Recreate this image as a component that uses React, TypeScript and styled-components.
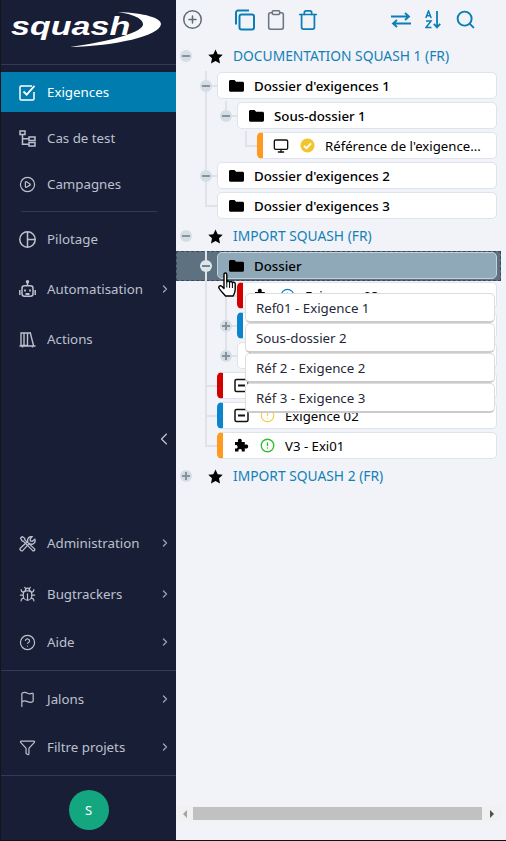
import React from 'react';
import styled, { createGlobalStyle } from 'styled-components';
import {
	Bug,
	ChevronLeft,
	ChevronRight,
	CircleAlert,
	CircleHelp,
	CirclePlay,
	CirclePlus,
	Clipboard,
	Filter,
	Flag,
	Info,
	Monitor,
	Search,
	Trash,
} from 'lucide-react';

const GlobalStyle = createGlobalStyle`
	html, body {
		margin: 0;
		padding: 0;
		background: #111;
	}
	* {
		box-sizing: border-box;
	}
`;

const FONT = `"Noto Sans", "Open Sans", sans-serif`;

const Page = styled.div`
	display: flex;
	width: 506px;
	height: 840px;
	font-family: ${FONT};
	overflow: hidden;
`;

const Sidebar = styled.nav`
	position: relative;
	display: flex;
	flex-direction: column;
	flex: 0 0 176px;
	border-left: 1px solid #14141c;
	background: #191e37;
`;

const LogoBar = styled.div`
	position: relative;
	flex: 0 0 65px;
	border-bottom: 1px solid #34385a;
`;

const LogoText = styled.span`
	position: absolute;
	left: 10px;
	top: 8px;
	font-family: 'Liberation Sans', sans-serif;
	font-size: 26px;
	font-weight: 700;
	font-style: italic;
	line-height: 36px;
	color: #fff;
	transform: scaleX(1.31);
	transform-origin: left center;
`;

const Swoosh = styled.svg`
	position: absolute;
	left: 0;
	top: 0;
`;

const NavGroup = styled.div<{ $gap: number; $top?: number }>`
	display: flex;
	flex-direction: column;
	gap: ${(p) => p.$gap}px;
	padding-top: ${(p) => p.$top ?? 0}px;
`;

const NavItem = styled.div<{ $active?: boolean; $after?: number }>`
	display: flex;
	align-items: center;
	height: 40px;
	margin-bottom: ${(p) => p.$after ?? 0}px;
	padding-left: 18px;
	padding-right: 5px;
	background: ${(p) => (p.$active ? '#007cae' : 'transparent')};
	color: ${(p) => (p.$active ? '#fff' : '#bcc1cd')};
	font-size: 13.3px;
`;

const NavIcon = styled.span`
	display: flex;
	align-items: center;
	justify-content: center;
	flex: 0 0 17px;
	margin-right: 11px;
`;

const NavLabel = styled.span`
	flex: 1;
	white-space: nowrap;
`;

const NavArrow = styled.span`
	display: flex;
	color: #9ba0ae;
`;

const NavSeparator = styled.div<{ $inset?: boolean; $top: number; $bottom: number }>`
	height: 1px;
	margin: ${(p) => p.$top}px ${(p) => (p.$inset ? '19px' : '0')} ${(p) => p.$bottom}px
		${(p) => (p.$inset ? '20px' : '0')};
	background: #34385a;
`;

const Spacer = styled.div`
	flex: 1;
`;

const Collapse = styled.span`
	position: absolute;
	left: 153px;
	top: 429px;
	color: #c4c8d2;
	display: flex;
`;

const AvatarBar = styled.div`
	display: flex;
	justify-content: center;
	padding: 14px 0 10px;
`;

const Avatar = styled.div`
	display: flex;
	align-items: center;
	justify-content: center;
	width: 40px;
	height: 40px;
	border-radius: 50%;
	background: #14a67e;
	color: #fff;
	font-size: 13px;
`;

const Main = styled.main`
	position: relative;
	display: flex;
	flex-direction: column;
	flex: 1;
	padding-right: 5px;
	background: #f1f3f8;
`;

const Toolbar = styled.div`
	display: flex;
	align-items: center;
	flex: 0 0 41px;
	padding-bottom: 2px;
`;

const ToolButton = styled.span<{ $color: string }>`
	display: flex;
	align-items: center;
	justify-content: center;
	flex: 0 0 32px;
	height: 36px;
	color: ${(p) => p.$color};
`;

const ToolGap = styled.div<{ $width: number }>`
	flex: 0 0 ${(p) => p.$width}px;
`;

const Tree = styled.div`
	flex: 1;
	display: flex;
	flex-direction: column;
`;

const Row = styled.div<{ $selected?: boolean }>`
	display: flex;
	align-items: stretch;
	height: 30px;
	${(p) =>
		p.$selected
			? `background: #5e7180; outline: 1px dashed #39495a; outline-offset: -1px;`
			: ''}
`;

type Line = 'none' | 'through' | 'branch' | 'last';

const Cell = styled.div<{ $line?: Line }>`
	position: relative;
	display: flex;
	align-items: center;
	justify-content: center;
	flex: 0 0 20px;

	&::before {
		content: '';
		display: ${(p) => (!p.$line || p.$line === 'none' ? 'none' : 'block')};
		position: absolute;
		left: 9px;
		top: 0;
		width: 2px;
		height: ${(p) => (p.$line === 'last' ? '16px' : '30px')};
		background: #dfe3e8;
	}

	&::after {
		content: '';
		display: ${(p) => (p.$line === 'branch' || p.$line === 'last' ? 'block' : 'none')};
		position: absolute;
		left: 9px;
		top: 14px;
		width: 12px;
		height: 2px;
		background: #dfe3e8;
	}
`;

const Toggle = styled.span<{ $light?: boolean; $plus?: boolean }>`
	position: relative;
	z-index: 1;
	display: block;
	width: 12px;
	height: 12px;
	border-radius: 50%;
	background: ${(p) => (p.$light ? '#dfe6ea' : '#d6dee5')};

	&::before {
		content: '';
		position: absolute;
		left: 2px;
		top: 5px;
		width: 8px;
		height: 2px;
		background: ${(p) => (p.$light ? '#74858f' : '#87939c')};
	}

	&::after {
		content: '';
		display: ${(p) => (p.$plus ? 'block' : 'none')};
		position: absolute;
		left: 5px;
		top: 2px;
		width: 2px;
		height: 8px;
		background: #87939c;
	}
`;

const ProjectStar = styled.span`
	display: flex;
	align-items: center;
	justify-content: center;
	flex: 0 0 37px;
	padding-left: 1px;
	color: #000;
`;

const ProjectName = styled.span`
	align-self: center;
	margin-bottom: 2px;
	font-size: 13.8px;
	font-weight: 400;
	color: #1380b6;
	white-space: nowrap;
`;

const Card = styled.div<{ $tab?: string; $selected?: boolean }>`
	display: flex;
	align-items: center;
	flex: 0 0 auto;
	width: calc(100% - var(--indent) - 4px);
	height: 27px;
	margin: 1px 0 2px 1px;
	border: 1px solid ${(p) => (p.$selected ? '#c3d2da' : '#dde4ec')};
	border-left: ${(p) => (p.$tab ? `6px solid ${p.$tab}` : undefined)};
	border-radius: 5px;
	background: ${(p) => (p.$selected ? '#90a9b8' : '#fff')};
	color: #000;
	font-size: 13.3px;
	white-space: nowrap;
	overflow: hidden;
`;

const FolderSlot = styled.span`
	display: flex;
	flex: 0 0 auto;
	margin: 0 10px 0 11px;
`;

const FolderName = styled.span`
	font-weight: 500;
`;

const KindSlot = styled.span`
	display: flex;
	justify-content: center;
	flex: 0 0 16px;
	margin-left: 10px;
`;

const StatusSlot = styled.span`
	display: flex;
	justify-content: center;
	flex: 0 0 16px;
	margin: 0 10px;
`;

const RequirementName = styled.span`
	font-size: 13.2px;
`;

const DragStack = styled.div`
	position: absolute;
	left: 69px;
	top: 293px;
	display: flex;
	flex-direction: column;
	width: 250px;
`;

const DragItem = styled.div`
	display: flex;
	align-items: center;
	height: 30px;
	padding-left: 10px;
	border: 1px solid #ddd;
	border-bottom: 2px solid #cbcbcb;
	border-radius: 5px;
	background: #fff;
	color: #1f2a38;
	font-size: 13.3px;
`;

const HandCursor = styled.svg`
	position: absolute;
	left: 42px;
	top: 272px;
`;

const ScrollTrack = styled.div`
	display: flex;
	align-items: center;
	flex: 0 0 15px;
	margin-bottom: 19px;
	background: #f1f1f1;
`;

const ScrollArrow = styled.span<{ $right?: boolean; $color: string }>`
	flex: 0 0 ${(p) => (p.$right ? 19 : 17)}px;
	display: flex;
	justify-content: center;

	&::before {
		content: '';
		border-style: solid;
		border-width: 4px 0 4px 4px;
		border-color: transparent transparent transparent ${(p) => p.$color};
		transform: ${(p) => (p.$right ? 'none' : 'scaleX(-1)')};
	}
`;

const ScrollThumb = styled.div`
	flex: 1;
	height: 13px;
	background: #c1c1c1;
`;

const Folder = () => (
	<svg width="15" height="13" viewBox="0 0 15 13">
		<path d="M1.5 1h4l1.6 1.8h6.4c.8 0 1.5.7 1.5 1.5v6.9c0 .8-.7 1.5-1.5 1.5h-12C.7 12.7 0 12 0 11.2V2.5C0 1.7.7 1 1.5 1z" />
	</svg>
);

const Star = () => (
	<svg width="15" height="15" viewBox="0 0 24 24">
		<path d="M12 .8l3.5 7.5 8.1 1-6 5.6 1.6 8.2L12 19l-7.2 4.1 1.6-8.2-6-5.6 8.1-1z" />
	</svg>
);

const Puzzle = () => (
	<svg width="15" height="15" viewBox="0 0 15 15">
		<path d="M1 4h3.2C3.4 3 3.8.8 5.8.8S8.3 3 7.5 4h3.3v3c1-.8 3.4-.6 3.400 1.600s-2.400 2.300-3.400 1.600v3.400H7.600c.6-1 .3-2.600-1.500-2.600S4 12.600 4.600 13.600H1v-3.200c1 .5 2.600.1 2.600-1.500S2 6.800 1 7.300z" />
	</svg>
);

const MinusBox = () => (
	<svg width="15" height="15" viewBox="0 0 15 15" fill="none" stroke="#111" strokeWidth="1.5">
		<rect x="1" y="1.5" width="13" height="12" rx="1.5" />
		<path d="M4 7.5h7" strokeWidth="2" />
	</svg>
);

const CheckedStatus = () => (
	<svg width="15" height="15" viewBox="0 0 15 15">
		<circle cx="7.5" cy="7.5" r="7" fill="#f2c52c" />
		<path d="M4 7.8l2.500 2.400L11 5.400" fill="none" stroke="#fff" strokeWidth="1.8" />
	</svg>
);

const CheckIcon = () => (
	<svg width="17" height="17" viewBox="0 0 17 17" fill="none" stroke="currentColor" strokeWidth="1.5">
		<path d="M13 2H2.200C1.500 2 1 2.500 1 3.200v11.600c0 .7.500 1.200 1.200 1.200h11.600c.7 0 1.200-.5 1.200-1.200V8" />
		<path d="M4.500 7.500l3.200 3.200L15.500 1.800" strokeWidth="1.8" />
	</svg>
);

const TreeIcon = () => (
	<svg width="17" height="17" viewBox="0 0 17 17" fill="none" stroke="currentColor" strokeWidth="1.5">
		<rect x="1" y="1" width="5" height="3.5" />
		<rect x="10" y="7" width="6" height="3.5" />
		<rect x="10" y="12.5" width="6" height="3.5" />
		<path d="M3.500 4.500V14.200H10M3.500 8.800H10" />
	</svg>
);

const PilotageIcon = () => (
	<svg width="17" height="17" viewBox="0 0 17 17" fill="none" stroke="currentColor" strokeWidth="1.5">
		<circle cx="8.5" cy="8.5" r="7.7" />
		<path d="M8.500 .7V16.300M8.500 8.500H16.300" />
	</svg>
);

const BotIcon = () => (
	<svg width="17" height="18" viewBox="0 0 17 18" fill="none" stroke="currentColor" strokeWidth="1.5">
		<circle cx="8.5" cy="1.8" r="1" fill="currentColor" />
		<path d="M8.500 3v2.500" />
		<rect x="3" y="5.8" width="11" height="10.5" rx="2.5" />
		<path d="M.8 10v5M16.200 10v5" />
		<path d="M6 9.500v2M11 9.500v2M6.500 14h4" strokeWidth="1.8" />
	</svg>
);

const BooksIcon = () => (
	<svg width="17" height="17" viewBox="0 0 17 17" fill="none" stroke="currentColor" strokeWidth="1.4">
		<path d="M2 2h3v12.500H2zM5 2h3.500v12.500H5zM8.500 2.200l2.800-.4 3.200 12.700M.5 15h16" />
		<path d="M3.500 15v1.500M13.500 15v1.500" />
	</svg>
);

const ToolsIcon = () => (
	<svg width="17" height="17" viewBox="0 0 17 17" fill="none" stroke="currentColor" strokeWidth="1.3">
		<path d="M1.500 3.200L3.200 1.500l2.500 1.800.2 1.700L15.500 13.800a1.300 1.300 0 0 1-1.800 1.800L4.200 6.100l-1 0z" />
		<path d="M15.800 4.300l-2.400 2-1.900-.4-.4-1.900 2-2.300a3.500 3.500 0 0 0-4.200 4.600L1.500 13a1.700 1.700 0 0 0 2.400 2.400l6.500-7a3.500 3.500 0 0 0 5.400-4.100z" />
	</svg>
);

const CopyIcon = () => (
	<svg width="21" height="22" viewBox="0 0 21 22" fill="none" stroke="currentColor" strokeWidth="2">
		<path d="M2 15.500V3.500A2 2 0 0 1 4 1.500h11" />
		<rect x="5.5" y="5.5" width="14.5" height="15" rx="2" />
	</svg>
);

const SwapIcon = () => (
	<svg width="20" height="16" viewBox="0 0 20 16" fill="none" stroke="currentColor" strokeWidth="1.8">
		<path d="M0 4.500h18M14 1l4 3.500-4 3.500M20 11.500H2M6 8l-4 3.500L6 15" />
	</svg>
);

const SortIcon = () => (
	<svg width="16" height="19" viewBox="0 0 16 19" fill="none" stroke="currentColor" strokeWidth="1.8">
		<path d="M12 1v16M8.800 13.800l3.200 3.600 3.200-3.600" />
		<path d="M.8 8L3.500 1l2.700 7M1.800 5.800h3.400" strokeWidth="1.5" />
		<path d="M1 11h5l-5 6.500h5.500" strokeWidth="1.5" />
	</svg>
);

const iconSize = { size: 17, strokeWidth: 1.7 };

const Arrow = () => (
	<NavArrow>
		<ChevronRight size={12} strokeWidth={2.8} />
	</NavArrow>
);

const Requirement = ({
	kind,
	status,
	name,
	tab,
}: {
	kind: React.ReactNode;
	status?: React.ReactNode;
	name: string;
	tab: string;
}) => (
	<Card $tab={tab}>
		<KindSlot>{kind}</KindSlot>
		<StatusSlot>{status}</StatusSlot>
		<RequirementName>{name}</RequirementName>
	</Card>
);

const FolderCard = ({ name, selected }: { name: string; selected?: boolean }) => (
	<Card $selected={selected}>
		<FolderSlot>
			<Folder />
		</FolderSlot>
		<FolderName>{name}</FolderName>
	</Card>
);

const ProjectRow = ({ name, plus }: { name: string; plus?: boolean }) => (
	<Row>
		<Cell>
			<Toggle $plus={plus} />
		</Cell>
		<ProjectStar>
			<Star />
		</ProjectStar>
		<ProjectName>{name}</ProjectName>
	</Row>
);

const Depth1 = styled(Row)`
	--indent: 41px;
`;
const Depth2 = styled(Row)`
	--indent: 61px;
`;
const Depth3 = styled(Row)`
	--indent: 81px;
`;

const App = () => {
	return (
		<Page>
			<GlobalStyle />
			<Sidebar>
				<LogoBar>
					<LogoText>squash</LogoText>
					<Swoosh width="175" height="60" viewBox="0 0 175 60">
						<path
							fill="#fff"
							d="M117 12C144 13 160 18 160 24C159 36 114 46 69 47C104 42 139 34 142 25C143 19 132 14 117 12Z"
						/>
					</Swoosh>
				</LogoBar>
				<NavGroup $gap={6} $top={7}>
					<NavItem $active>
						<NavIcon>
							<CheckIcon />
						</NavIcon>
						<NavLabel>Exigences</NavLabel>
					</NavItem>
					<NavItem>
						<NavIcon>
							<TreeIcon />
						</NavIcon>
						<NavLabel>Cas de test</NavLabel>
					</NavItem>
					<NavItem>
						<NavIcon>
							<CirclePlay {...iconSize} />
						</NavIcon>
						<NavLabel>Campagnes</NavLabel>
					</NavItem>
				</NavGroup>
				<NavSeparator $inset $top={7} $bottom={7} />
				<NavGroup $gap={10}>
					<NavItem>
						<NavIcon>
							<PilotageIcon />
						</NavIcon>
						<NavLabel>Pilotage</NavLabel>
					</NavItem>
					<NavItem>
						<NavIcon>
							<BotIcon />
						</NavIcon>
						<NavLabel>Automatisation</NavLabel>
						<Arrow />
					</NavItem>
					<NavItem>
						<NavIcon>
							<BooksIcon />
						</NavIcon>
						<NavLabel>Actions</NavLabel>
					</NavItem>
				</NavGroup>
				<Collapse>
					<ChevronLeft size={20} strokeWidth={1.4} />
				</Collapse>
				<Spacer />
				<NavGroup $gap={8}>
					<NavItem $after={3}>
						<NavIcon>
							<ToolsIcon />
						</NavIcon>
						<NavLabel>Administration</NavLabel>
						<Arrow />
					</NavItem>
					<NavItem>
						<NavIcon>
							<Bug {...iconSize} />
						</NavIcon>
						<NavLabel>Bugtrackers</NavLabel>
						<Arrow />
					</NavItem>
					<NavItem>
						<NavIcon>
							<CircleHelp {...iconSize} />
						</NavIcon>
						<NavLabel>Aide</NavLabel>
						<Arrow />
					</NavItem>
				</NavGroup>
				<NavSeparator $top={8} $bottom={8} />
				<NavGroup $gap={8}>
					<NavItem>
						<NavIcon>
							<Flag {...iconSize} />
						</NavIcon>
						<NavLabel>Jalons</NavLabel>
						<Arrow />
					</NavItem>
					<NavItem>
						<NavIcon>
							<Filter {...iconSize} />
						</NavIcon>
						<NavLabel>Filtre projets</NavLabel>
						<Arrow />
					</NavItem>
				</NavGroup>
				<NavSeparator $top={8} $bottom={0} />
				<AvatarBar>
					<Avatar>S</Avatar>
				</AvatarBar>
			</Sidebar>

			<Main>
				<Toolbar>
					<ToolButton $color="#5f6b75">
						<CirclePlus size={21} strokeWidth={1.7} />
					</ToolButton>
					<ToolGap $width={20} />
					<ToolButton $color="#0b7fb5">
						<CopyIcon />
					</ToolButton>
					<ToolButton $color="#6b7780">
						<Clipboard size={22} strokeWidth={1.7} />
					</ToolButton>
					<ToolButton $color="#0b7fb5">
						<Trash size={22} strokeWidth={1.9} />
					</ToolButton>
					<ToolGap $width={61} />
					<ToolButton $color="#0b7fb5">
						<SwapIcon />
					</ToolButton>
					<ToolButton $color="#0b7fb5">
						<SortIcon />
					</ToolButton>
					<ToolButton $color="#0b7fb5">
						<Search size={21} strokeWidth={2.2} />
					</ToolButton>
				</Toolbar>

				<Tree>
					<ProjectRow name="DOCUMENTATION SQUASH 1 (FR)" />
					<Depth1>
						<Cell />
						<Cell $line="branch">
							<Toggle />
						</Cell>
						<FolderCard name="Dossier d'exigences 1" />
					</Depth1>
					<Depth2>
						<Cell />
						<Cell $line="through" />
						<Cell $line="last">
							<Toggle />
						</Cell>
						<FolderCard name="Sous-dossier 1" />
					</Depth2>
					<Depth3>
						<Cell />
						<Cell $line="through" />
						<Cell />
						<Cell $line="last" />
						<Requirement
							tab="#ff9a1f"
							kind={<Monitor size={16} color="#111" strokeWidth={2} />}
							status={<CheckedStatus />}
							name="Référence de l'exigence..."
						/>
					</Depth3>
					<Depth1>
						<Cell />
						<Cell $line="branch">
							<Toggle />
						</Cell>
						<FolderCard name="Dossier d'exigences 2" />
					</Depth1>
					<Depth1>
						<Cell />
						<Cell $line="last" />
						<FolderCard name="Dossier d'exigences 3" />
					</Depth1>

					<ProjectRow name="IMPORT SQUASH (FR)" />
					<Depth1 $selected>
						<Cell />
						<Cell $line="through">
							<Toggle $light />
						</Cell>
						<FolderCard name="Dossier" selected />
					</Depth1>
					<Depth2>
						<Cell />
						<Cell $line="through" />
						<Cell $line="branch" />
						<Requirement
							tab="#d30000"
							kind={<Puzzle />}
							status={<Info size={15} color="#1380b6" />}
							name="Exigence 03"
						/>
					</Depth2>
					<Depth2>
						<Cell />
						<Cell $line="through" />
						<Cell $line="branch">
							<Toggle $plus />
						</Cell>
						<Requirement tab="#0a84cc" kind={null} name="" />
					</Depth2>
					<Depth2>
						<Cell />
						<Cell $line="through" />
						<Cell $line="last">
							<Toggle $plus />
						</Cell>
						<FolderCard name="" />
					</Depth2>
					<Depth1>
						<Cell />
						<Cell $line="branch" />
						<Requirement tab="#d30000" kind={<MinusBox />} name="" />
					</Depth1>
					<Depth1>
						<Cell />
						<Cell $line="branch" />
						<Requirement
							tab="#0a84cc"
							kind={<MinusBox />}
							status={<CircleAlert size={15} color="#f2cf4a" />}
							name="Exigence 02"
						/>
					</Depth1>
					<Depth1>
						<Cell />
						<Cell $line="last" />
						<Requirement
							tab="#ff9a1f"
							kind={<Puzzle />}
							status={<CircleAlert size={15} color="#2fc02f" strokeWidth={2.2} />}
							name="V3 - Exi01"
						/>
					</Depth1>
					<ProjectRow name="IMPORT SQUASH 2 (FR)" plus />
				</Tree>

				<ScrollTrack>
					<ScrollArrow $color="#a3a3a3" />
					<ScrollThumb />
					<ScrollArrow $right $color="#505050" />
				</ScrollTrack>

				<DragStack>
					<DragItem>Ref01 - Exigence 1</DragItem>
					<DragItem>Sous-dossier 2</DragItem>
					<DragItem>Réf 2 - Exigence 2</DragItem>
					<DragItem>Réf 3 - Exigence 3</DragItem>
				</DragStack>

				<HandCursor width="21" height="27" viewBox="0 0 21 27">
					<path
						fill="#fff"
						stroke="#000"
						strokeWidth="1.4"
						strokeLinejoin="round"
						d="M6 2.500c0-2 2.800-2 2.800 0V10c.2-1.300 2.800-1.300 2.800.4.300-1.300 2.800-1.200 2.800.6.300-1.200 2.800-1 2.800.8v5.700c0 3-1.200 4.500-2 6.500H7.500C6 22 3 19.500 1.200 16.500c-1.200-2 1-3.500 2.500-2.200L6 16.500z"
					/>
					<path stroke="#000" strokeWidth="1" d="M8.800 10v5.500M11.600 10.400v5.500M14.400 11v5" />
				</HandCursor>
			</Main>
		</Page>
	);
};

export default App;
